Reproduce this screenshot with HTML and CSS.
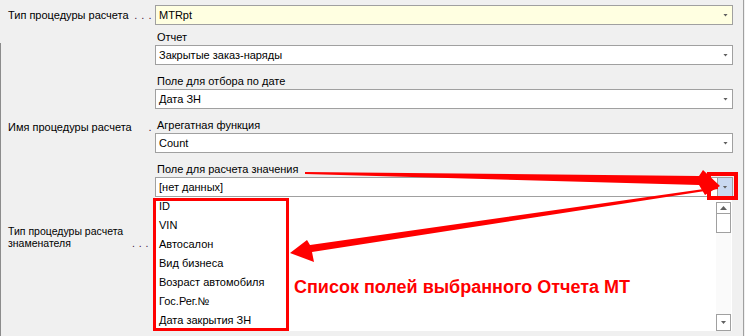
FILE: index.html
```html
<!DOCTYPE html>
<html lang="ru">
<head>
<meta charset="utf-8">
<title>Параметры процедуры расчета</title>
<link rel="stylesheet" href="styles.css">
</head>
<body>
<div class="frame">
  <div class="form">
    <div class="lbl lbl-1"><span>Тип процедуры расчета</span><span class="dots">. . .</span></div>
    <div class="col col-1">
      <div class="combo combo-yellow"><span class="val">MTRpt</span><span class="arr"></span></div>
      <div class="cap cap-tight">Отчет</div>
      <div class="combo"><span class="val">Закрытые заказ-наряды</span><span class="arr"></span></div>
      <div class="cap">Поле для отбора по дате</div>
      <div class="combo"><span class="val">Дата ЗН</span><span class="arr"></span></div>
    </div>

    <div class="lbl lbl-2"><span>Имя процедуры расчета</span><span class="dots">.</span></div>
    <div class="col">
      <div class="cap">Агрегатная функция</div>
      <div class="combo"><span class="val">Count</span><span class="arr"></span></div>
      <div class="cap cap-marked">Поле для расчета значения</div>
      <div class="combo combo-open">
        <span class="val">[нет данных]</span>
        <span class="btn"><span class="arr"></span></span>
        <div class="list">
          <ul class="items">
            <li>ID</li>
            <li>VIN</li>
            <li>Автосалон</li>
            <li>Вид бизнеса</li>
            <li>Возраст автомобиля</li>
            <li>Гос.Рег.№</li>
            <li>Дата закрытия ЗН</li>
          </ul>
          <div class="sbar">
            <span class="sb-btn sb-up"><span class="tri-up"></span></span>
            <span class="sb-thumb"></span>
            <span class="sb-track"></span>
            <span class="sb-btn sb-down"><span class="arr"></span></span>
          </div>
        </div>
      </div>
    </div>

    <div class="lbl lbl-3"><span>Тип процедуры расчета<br>знаменателя</span><span class="dots">. . .</span></div>
    <div class="col"></div>
  </div>

  <svg class="annot" width="745" height="336" viewBox="0 0 745 336" aria-hidden="true">
    <polygon points="305,172 699,176 703,170 720,186 705,195 699,185 305,174" fill="#ff0000"/>
    <polygon points="718,187 310,245 307,240 290,253 314,262 312,252 718,189" fill="#ff0000"/>
  </svg>
  <div class="box box-list"></div>
  <div class="box box-btn"></div>
  <div class="note">Список полей выбранного Отчета МТ</div>
</div>
</body>
</html>
```
FILE: styles.css
```css
* { box-sizing: border-box; }

html, body {
  margin: 0;
  padding: 0;
  background: #f0f0f0;
}

body {
  width: 745px;
  height: 336px;
  overflow: hidden;
  font-family: "Liberation Sans", Arial, sans-serif;
  font-size: 11px;
  color: #000;
}

.frame {
  position: relative;
  width: 744px;
  height: 336px;
  border-right: 1px solid #a0a0a0;
}

.frame::before {
  content: "";
  position: absolute;
  left: 0;
  top: 43px;
  bottom: 0;
  width: 1px;
  background: #8c8c8c;
}

.form {
  display: grid;
  grid-template-columns: 155px 578px;
  align-items: start;
}

.lbl {
  display: flex;
  align-items: flex-end;
  justify-content: space-between;
  padding-left: 8px;
  padding-right: 3px;
  line-height: 15px;
}

.lbl-1 { margin-top: 8px; }
.lbl-2 { margin-top: 11px; }
.lbl-3 {
  margin-top: 28px;
  font-size: 10.5px;
  line-height: 12px;
  padding-right: 6px;
}

.dots {
  color: #402040;
  letter-spacing: 0.5px;
}

.col {
  display: flex;
  flex-direction: column;
}

.col-1 { padding-top: 5px; }

.cap {
  margin-top: 9px;
  height: 15px;
  line-height: 15px;
  padding-left: 2px;
}

.cap-tight { margin-top: 5px; }

.cap-marked span,
.cap-marked {
  position: relative;
}

.cap-marked::after {
  content: "";
  position: absolute;
  left: 1px;
  top: 15px;
  width: 144px;
  height: 2px;
  background: #ff0000;
}

.combo {
  position: relative;
  display: flex;
  align-items: center;
  height: 20px;
  border: 1px solid #a0a0a0;
  background: #fff;
  padding-left: 3px;
}

.combo-yellow { background: #ffffe1; }

.val {
  flex: 1;
  line-height: 18px;
  white-space: nowrap;
}

.arr {
  display: block;
  width: 5px;
  height: 3px;
  margin-right: 4px;
  background: #606060;
  clip-path: polygon(0 0, 100% 0, 50% 100%);
}

.btn {
  display: flex;
  align-items: center;
  justify-content: center;
  align-self: stretch;
  width: 15px;
  background: #cad9f1;
  border-left: 1px solid #a0a0a0;
}

.btn .arr { margin-right: 0; }

.list {
  position: absolute;
  left: -1px;
  right: 0;
  top: 19px;
  height: 134px;
  display: flex;
  background: #fff;
}

.items {
  flex: 1;
  margin: 0;
  padding: 0;
  list-style: none;
}

.items li {
  height: 19px;
  line-height: 19px;
  padding-left: 4px;
  white-space: nowrap;
}

.sbar {
  width: 16px;
  display: flex;
  flex-direction: column;
  padding-top: 5px;
  padding-right: 1px;
}

.sb-btn,
.sb-thumb {
  display: flex;
  align-items: center;
  justify-content: center;
  border: 1px solid #a0a0a0;
  background: #fff;
}

.sb-up { height: 12px; }
.sb-thumb { height: 19px; border-top: 0; }
.sb-track { flex: 1; background: #fafafa; }
.sb-down { height: 17px; }
.sb-down .arr { margin-right: 0; }

.tri-up {
  display: block;
  width: 7px;
  height: 4px;
  background: #606060;
  clip-path: polygon(50% 0, 100% 100%, 0 100%);
}

.annot {
  position: absolute;
  left: 0;
  top: 0;
  pointer-events: none;
}

.box {
  position: absolute;
  border: 3px solid #ff0000;
}

.box-list {
  left: 153px;
  top: 198px;
  width: 136px;
  height: 133px;
}

.box-btn {
  left: 707px;
  top: 172px;
  width: 31px;
  height: 28px;
  border-width: 4px;
}

.note {
  position: absolute;
  left: 294px;
  top: 277px;
  color: #ff0000;
  font-weight: bold;
  font-size: 18px;
  line-height: 20px;
  white-space: nowrap;
}
```
